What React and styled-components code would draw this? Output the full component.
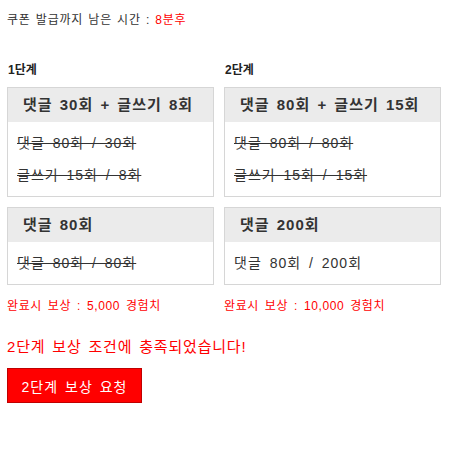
import React from "react";
import styled, { createGlobalStyle } from "styled-components";

const stages = [
  {
    label: "1단계",
    width: 207,
    reward: "5,000",
    missions: [
      {
        title: "댓글 30회 + 글쓰기 8회",
        rows: [
          { text: "댓글 80회 / 30회", done: true },
          { text: "글쓰기 15회 / 8회", done: true },
        ],
      },
      {
        title: "댓글 80회",
        rows: [{ text: "댓글 80회 / 80회", done: true }],
      },
    ],
  },
  {
    label: "2단계",
    width: 217,
    reward: "10,000",
    missions: [
      {
        title: "댓글 80회 + 글쓰기 15회",
        rows: [
          { text: "댓글 80회 / 80회", done: true },
          { text: "글쓰기 15회 / 15회", done: true },
        ],
      },
      {
        title: "댓글 200회",
        rows: [{ text: "댓글 80회 / 200회", done: false }],
      },
    ],
  },
];

const App = () => {
  return (
    <>
      <GlobalStyle />
      <Page>
        <Timer>
          쿠폰 발급까지 남은 시간 : <Red>8분후</Red>
        </Timer>
        <Stages>
          {stages.map((stage) => (
            <Stage key={stage.label} style={{ width: stage.width }}>
              <StageLabel>{stage.label}</StageLabel>
              {stage.missions.map((m) => (
                <Card key={m.title}>
                  <CardHeader>{m.title}</CardHeader>
                  <CardBody>
                    {m.rows.map((r) => (
                      <Row key={r.text} $done={r.done}>
                        {r.text}
                      </Row>
                    ))}
                  </CardBody>
                </Card>
              ))}
              <Reward>완료시 보상 : {stage.reward} 경험치</Reward>
            </Stage>
          ))}
        </Stages>
        <Message>2단계 보상 조건에 충족되었습니다!</Message>
        <RequestButton>2단계 보상 요청</RequestButton>
      </Page>
    </>
  );
};

export default App;

const GlobalStyle = createGlobalStyle`
  body {
    margin: 0;
    background: #fff;
    font-family: "Liberation Sans", "Noto Sans CJK KR", sans-serif;
    color: #333;
  }
`;

const Page = styled.div`
  padding: 12px 7px 0;
`;

const Timer = styled.div`
  font-size: 12px;
  line-height: 16px;
  color: #333;
  letter-spacing: 0.8px;
  word-spacing: 1px;
`;

const Red = styled.span`
  color: #ff0000;
`;

const Stages = styled.div`
  display: flex;
  gap: 10px;
  margin-top: 34px;
  align-items: flex-start;
`;

const Stage = styled.div`
  display: flex;
  flex-direction: column;
`;

const StageLabel = styled.div`
  font-size: 12px;
  line-height: 16px;
  font-weight: bold;
  color: #222;
  padding-left: 1px;
  margin-bottom: 9px;
`;

const Card = styled.div`
  border: 1px solid #d6d6d6;
  background: #fff;
  margin-bottom: 10px;
`;

const CardHeader = styled.div`
  background: #ebebeb;
  height: 34px;
  line-height: 34px;
  padding-left: 15px;
  font-size: 15px;
  font-weight: bold;
  color: #333;
  white-space: nowrap;
  letter-spacing: 1px;
  word-spacing: 2px;
`;

const CardBody = styled.div`
  padding: 5px 9px;
`;

const Row = styled.div`
  font-size: 14px;
  line-height: 32px;
  color: #333;
  white-space: nowrap;
  letter-spacing: 1px;
  word-spacing: 3px;
  text-decoration: ${(p) => (p.$done ? "line-through" : "none")};
`;

const Reward = styled.div`
  font-size: 12px;
  line-height: 16px;
  color: #ff0000;
  margin-top: 3px;
  letter-spacing: 0.6px;
  word-spacing: 2px;
`;

const Message = styled.div`
  font-size: 15px;
  line-height: 20px;
  color: #ff0000;
  margin-top: 23px;
  letter-spacing: 0.8px;
  word-spacing: 2px;
`;

const RequestButton = styled.button`
  margin-top: 11px;
  width: 135px;
  height: 35px;
  background: #ff0000;
  border: 1px solid #c00000;
  color: #fff;
  font-family: "Liberation Sans", "Noto Sans CJK KR", sans-serif;
  font-size: 14px;
  letter-spacing: 1px;
  word-spacing: 2px;
  padding: 0;
  cursor: pointer;
`;
